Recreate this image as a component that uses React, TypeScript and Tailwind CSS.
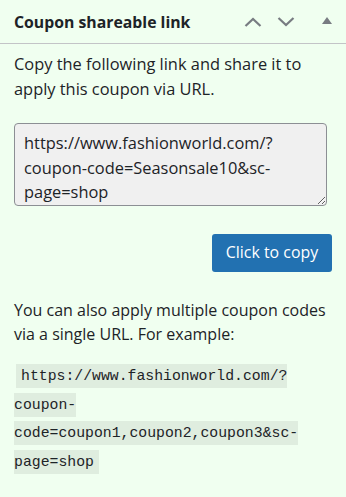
import React from "react";

export default function App() {
  return (
    <div className="w-[346px] h-[497px] bg-[#f0fff0] text-[#1d2327] font-['Open_Sans',sans-serif] overflow-hidden">
      <div className="h-[44px] border-b border-[#c3c4c7] flex items-center pl-[14px] pr-[14px]">
        <h2 className="text-[15.8px] font-bold leading-none flex-1 pt-[2px]">Coupon shareable link</h2>
        <div className="flex items-center text-[#787c82]">
          <svg width="18" height="10" viewBox="0 0 18 10" className="mr-[15px]">
            <path d="M1.5 9 L9 2 L16.5 9" fill="none" stroke="currentColor" strokeWidth="2.2" />
          </svg>
          <svg width="18" height="10" viewBox="0 0 18 10" className="mr-[27px]">
            <path d="M1.5 1 L9 8 L16.5 1" fill="none" stroke="currentColor" strokeWidth="2.2" />
          </svg>
          <svg width="10" height="7" viewBox="0 0 10 7" className="mb-[3px]">
            <path d="M0 7 L5 0 L10 7 Z" fill="currentColor" />
          </svg>
        </div>
      </div>
      <div className="px-[14px]">
        <p className="mt-[7px] text-[16.4px] leading-[25px]">
          Copy the following link and share it to apply this coupon via URL.
        </p>
        <textarea
          readOnly
          value="https://www.fashionworld.com/?coupon-code=Seasonsale10&sc-page=shop"
          className="block mt-[22px] w-[313px] h-[83px] bg-[#f0f0f0] border border-[#8c8f94] rounded-[4px] pl-[9px] pr-[6px] pt-[7px] text-[16.4px] leading-[24.5px] text-[#1d2327] outline-none resize-y"
        />
        <div className="flex justify-end mt-[28px]">
          <button className="h-[38px] w-[120px] rounded-[3px] bg-[#2271b1] text-white text-[15.9px] leading-none">
            Click to copy
          </button>
        </div>
        <p className="mt-[26px] text-[16px] leading-[24px]">
          You can also apply multiple coupon codes via a single URL. For example:
        </p>
        <p className="mt-[15px] leading-[26.5px]">
          <code className="ml-[2px] px-[5px] pt-[4px] pb-[4px] bg-[#dfeddf] font-['Liberation_Mono',monospace] text-[14.8px]">
            https://www.fashionworld.com/?coupon-code=coupon1,coupon2,coupon3&amp;sc-page=shop
          </code>
        </p>
      </div>
    </div>
  );
}
